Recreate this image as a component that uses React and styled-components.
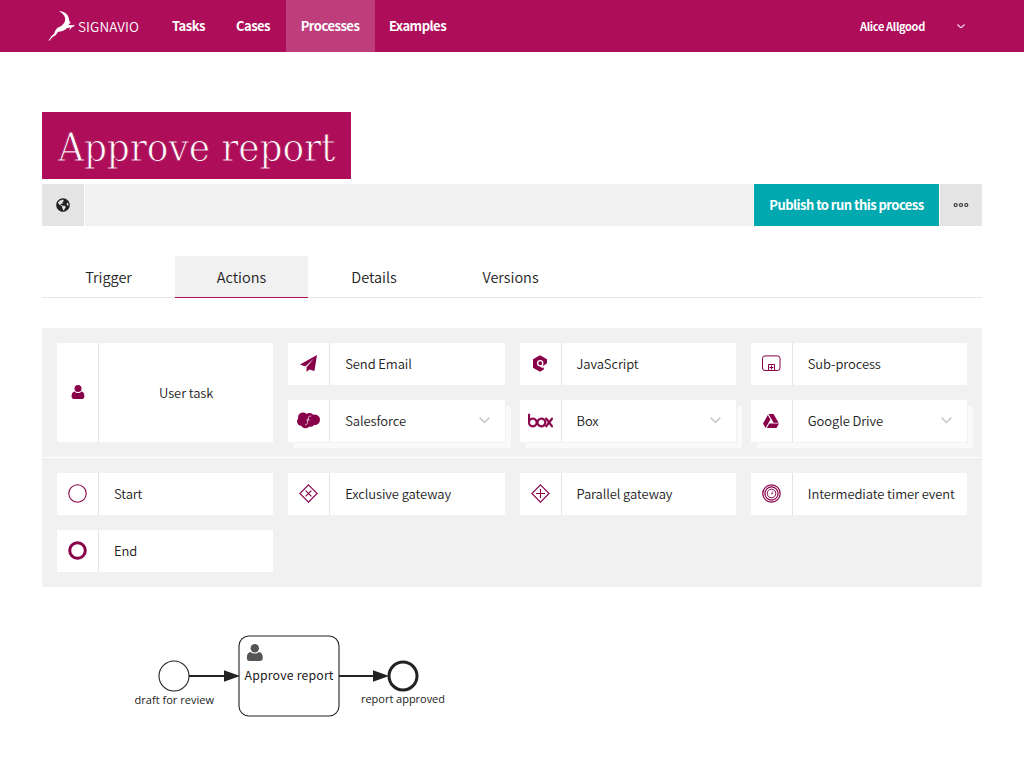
import React from 'react';
import styled, { createGlobalStyle } from 'styled-components';
import { FaGlobeAmericas, FaGoogleDrive } from 'react-icons/fa';
import { SiBox } from 'react-icons/si';

const magenta = '#ae0d5a';
const plum = '#870048';
const ink = '#222222';
const sans = '"Noto Sans CJK SC", "Noto Sans", sans-serif';

const GlobalStyle = createGlobalStyle`
  *, *::before, *::after { box-sizing: border-box; }
  body {
    margin: 0;
    background: #fff;
    color: ${ink};
    font-family: ${sans};
    font-size: 13px;
    line-height: 20px;
  }
  svg { display: block; flex: none; }
`;

const Header = styled.header`
  display: flex;
  align-items: stretch;
  height: 52px;
  padding-left: 47px;
  background: ${magenta};
  color: #fff;
`;

const Brand = styled.div`
  display: flex;
  align-items: center;
  width: 110px;
  padding-bottom: 1px;
`;

const BrandName = styled.span`
  margin-left: 3px;
  font-size: 13.5px;
  font-weight: 350;
  letter-spacing: 0.1px;
`;

const Nav = styled.nav`
  display: flex;
`;

const NavItem = styled.a`
  display: flex;
  align-items: center;
  justify-content: center;
  width: ${(p) => p.$width}px;
  padding-right: 1px;
  font-size: 13px;
  font-weight: 700;
  letter-spacing: -0.5px;
  background: ${(p) => (p.$active ? '#be3d7b' : 'transparent')};
`;

const Account = styled.div`
  display: flex;
  align-items: center;
  justify-content: space-between;
  width: 105px;
  margin-left: auto;
  margin-right: 59px;
  font-size: 11px;
  font-weight: 700;
  letter-spacing: -0.35px;
`;

const Page = styled.main`
  padding: 60px 42px 0;
`;

const Title = styled.h1`
  display: flex;
  align-items: center;
  width: 309px;
  height: 67px;
  margin: 0 0 5px;
  padding: 2px 0 0 16px;
  background: ${magenta};
  color: #fff;
  font-family: "DejaVu Serif Condensed", "DejaVu Serif", serif;
  font-stretch: condensed;
  font-size: 40px;
  font-weight: 400;
  letter-spacing: -0.1px;
  white-space: nowrap;
  -webkit-text-stroke: 0.85px ${magenta};
`;

const Toolbar = styled.div`
  display: flex;
  gap: 1px;
  height: 42px;
`;

const IconButton = styled.button`
  display: flex;
  align-items: center;
  justify-content: center;
  width: 42px;
  padding: 0 0 1px;
  border: 0;
  background: #e4e4e4;
  color: ${ink};
`;

const ToolbarFill = styled.div`
  flex: 1;
  background: #f1f1f1;
`;

const PublishButton = styled.button`
  width: 185px;
  padding: 0 0 2px;
  border: 0;
  background: #00a9af;
  color: #fff;
  font-family: ${sans};
  font-size: 13px;
  font-weight: 700;
  letter-spacing: -0.53px;
  white-space: nowrap;
`;

const Tabs = styled.div`
  display: flex;
  height: 42px;
  margin-top: 30px;
  background: linear-gradient(#e4e4e4, #e4e4e4) bottom / 100% 1px no-repeat;
`;

const Tab = styled.div`
  display: flex;
  align-items: center;
  justify-content: center;
  width: ${(p) => p.$width}px;
  font-size: 14.5px;
  font-weight: 350;
  background: ${(p) => (p.$active ? '#f1f1f1' : 'transparent')};
  border-bottom: 1px solid ${(p) => (p.$active ? magenta : 'transparent')};
`;

const Palette = styled.section`
  display: grid;
  gap: 1px;
  margin-top: 30px;
`;

const PaletteGroup = styled.div`
  display: grid;
  grid-template-columns: repeat(4, 1fr);
  grid-auto-rows: 42px;
  gap: 15px;
  padding: 15px;
  background: #f1f1f1;
`;

const Card = styled.div`
  display: flex;
  grid-row: span ${(p) => (p.$tall ? 2 : 1)};
  min-width: 0;
  background: #fff;
  box-shadow: ${(p) => (p.$stacked ? '1px 1px 0 #f1f1f1, 6px 6px 0 #fafafa' : 'none')};
`;

const CardIcon = styled.div`
  display: flex;
  align-items: center;
  justify-content: center;
  width: 42px;
  flex: none;
  padding-bottom: 1px;
  border-right: 1px solid #e4e4e4;
  color: ${plum};
`;

const CardLabel = styled.div`
  display: flex;
  flex: 1;
  align-items: center;
  justify-content: ${(p) => (p.$centered ? 'center' : 'space-between')};
  padding: ${(p) => (p.$centered ? '1px 15px 0' : '0 15px 1px 15px')};
  font-weight: 350;
  letter-spacing: -0.1px;
  white-space: nowrap;
`;

const Antelope = () => (
  <svg width="28" height="31" viewBox="47 11 28 31" fill="#fff">
    <path d="M60 12.200c4.800.3 8.700 3.300 9 8.300l.4 1.500 1.300 2.200-1.700.6-.3 1.200 4.400.2 1.400-.5-.3 1.600-2.500 1-2.100 3.300.3-3-3.100.6c-2.100 2.500-5 3.200-8.600 3.500l-2.400 3.400-3.500 2.100-3 3.500-.8-.3 3-4.300 2.500-2 1.300-3.600 2-2.500 4.300-2.200 2.500-2.900.8-1.800c1.300-3.800-1.300-7.600-5.900-9.900z" />
  </svg>
);

const Chevron = ({ width = 11, color = '#c8c8c8', stroke = 1.4 }) => (
  <svg width={width} height={width * 0.6} viewBox="0 0 10 6" fill="none" stroke={color} strokeWidth={stroke}>
    <path d="M.6.6 5 5 9.400.6" />
  </svg>
);

const Person = ({ size = 14, color = plum }) => (
  <svg width={size} height={size} viewBox="0 0 14 14" fill={color}>
    <circle cx="7" cy="3.500" r="3.500" />
    <path d="M3.600 6.500C1.500 6.800.6 8.700.6 11.300.6 13 1.500 14 3 14h8c1.500 0 2.400-1 2.400-2.700 0-2.600-.9-4.500-3-4.800C9.500 7.500 8.400 8 7 8S4.500 7.500 3.600 6.500z" />
  </svg>
);

const PaperPlane = () => (
  <svg width="17" height="17" viewBox="0 0 16 16" fill={plum}>
    <path d="M16 0 0 9l5 1.900L13 3.300 6.200 11.500V16l2.500-2.300 4.900 1.300z" />
  </svg>
);

const Salesforce = () => (
  <svg width="23" height="17" viewBox="0 0 23 17" fill={plum}>
    <circle cx="6" cy="5.300" r="4.900" />
    <circle cx="4.200" cy="9.500" r="4.200" />
    <circle cx="12.500" cy="5.300" r="4.400" />
    <circle cx="17.800" cy="7.700" r="5.200" />
    <circle cx="8.500" cy="11.500" r="4.800" />
    <circle cx="13.500" cy="10.500" r="4.300" />
    <path d="M14.200 4.200c-1.600-.6-2.500.2-2.800 1.600l-1.100 5.200c-.3 1.300-.9 2-2.200 1.700M9.300 7.900h3.400" fill="none" stroke="#fff" strokeWidth=".7" />
  </svg>
);

const HexScript = () => (
  <svg width="16" height="17" viewBox="0 0 16 17">
    <path d="M8 .3 15 4.300V8.200L11.500 10.700 9 12.200l2.800 2.400L8 16.700 1 12.700V4.300z" fill={plum} />
    <path d="M9.500 12.800h2.600l-1 2.200z" fill={plum} />
    <circle cx="8.200" cy="8.300" r="2.600" fill="none" stroke="#fff" strokeWidth="1.300" />
    <path d="M8.200 11.300h4" stroke="#fff" strokeWidth="1.200" />
  </svg>
);

const BoxLogo = styled(SiBox)`
  stroke: currentColor;
  stroke-width: 0.35;
`;

const SubProcess = () => (
  <svg width="19" height="17" viewBox="0 0 19 17" fill="none" stroke={plum}>
    <rect x=".5" y=".9" width="17.500" height="14.600" rx="2.500" />
    <path d="M6.500 15.500v-6h6v6M9.500 10.500v4M7.500 12.500h4" />
  </svg>
);

const Gateway = ({ children }) => (
  <svg width="19" height="19" viewBox="0 0 19 19" fill="none" stroke={plum} strokeWidth="1.100">
    <path d="M9.500.9 18.100 9.500 9.500 18.100.9 9.500z" />
    {children}
  </svg>
);

const Ring = ({ stroke, children }) => (
  <svg width="19" height="19" viewBox="0 0 19 19" fill="none" stroke={plum}>
    <circle cx="9.500" cy="9.500" r={9.3 - stroke / 2} strokeWidth={stroke} />
    {children}
  </svg>
);

const TimerEvent = () => (
  <Ring stroke={1.2}>
    <circle cx="9.500" cy="9.500" r="6.600" strokeWidth="1.200" />
    <circle cx="9.500" cy="9.500" r="4.300" />
    <path d="M9.300 9.800h1.900M9.600 9.800l1.300-2.600" strokeWidth=".7" />
  </Ring>
);

const Dots = () => (
  <svg width="16" height="6" viewBox="0 0 16 6" fill="none" stroke="#333" strokeWidth="1.200">
    <circle cx="2.700" cy="3" r="1.500" />
    <circle cx="8" cy="3" r="1.500" />
    <circle cx="13.300" cy="3" r="1.500" />
  </svg>
);

const taskItems = [
  { label: 'User task', icon: <Person />, tall: true },
  { label: 'Send Email', icon: <PaperPlane /> },
  { label: 'JavaScript', icon: <HexScript /> },
  { label: 'Sub-process', icon: <SubProcess /> },
  { label: 'Salesforce', icon: <Salesforce />, stacked: true },
  { label: 'Box', icon: <BoxLogo size={25} />, stacked: true },
  { label: 'Google Drive', icon: <FaGoogleDrive size={16} />, stacked: true },
];

const eventItems = [
  { label: 'Start', icon: <Ring stroke={1.1} /> },
  { label: 'Exclusive gateway', icon: <Gateway><path d="m6.600 6.600 5.800 5.800M12.400 6.600l-5.800 5.800" /></Gateway> },
  { label: 'Parallel gateway', icon: <Gateway><path d="M9.500 5v9M5 9.500h9" /></Gateway> },
  { label: 'Intermediate timer event', icon: <TimerEvent /> },
  { label: 'End', icon: <Ring stroke={3} /> },
];

const PaletteItems = ({ items }) => (
  <PaletteGroup>
    {items.map((item) => (
      <Card key={item.label} $tall={item.tall} $stacked={item.stacked}>
        <CardIcon>{item.icon}</CardIcon>
        <CardLabel $centered={item.tall}>
          {item.label}
          {item.stacked && <Chevron />}
        </CardLabel>
      </Card>
    ))}
  </PaletteGroup>
);

const Diagram = styled.svg`
  width: 940px;
  height: 181px;
  font-family: "Open Sans", "Noto Sans", sans-serif;
`;

const ProcessDiagram = () => (
  <Diagram viewBox="42 587 940 181" fill="none" stroke={ink}>
    <circle cx="174" cy="676" r="15" strokeWidth="1.100" />
    <path d="M189 676h36M339 676h36" strokeWidth="2" />
    <path d="M224 670.300 240 676l-16 5.700zM373 670.300 389 676l-16 5.700z" fill={ink} stroke="none" />
    <rect x="239" y="636" width="100" height="80" rx="10" strokeWidth="1.100" />
    <circle cx="403" cy="676" r="14" strokeWidth="3" />
    <g transform="translate(246 644)" fill="#555" stroke="none">
      <circle cx="8.800" cy="4.200" r="4.200" />
      <path d="M4.800 8C2 8.400.8 10.500.8 13.500c0 2.400.8 3.500 3 3.500h10c2.200 0 3-1.100 3-3.500 0-3-1.200-5.100-4-5.500-1 1-2.300 1.600-4 1.600S5.800 9 4.800 8z" />
    </g>
    <g fill={ink} stroke="none">
      <text x="134.500" y="704" fontSize="11" textLength="79.500">draft for review</text>
      <text x="244.500" y="680" fontSize="12.300" fontFamily="Noto Sans CJK SC, sans-serif" textLength="89">Approve report</text>
      <text x="361" y="703" fontSize="11" textLength="84">report approved</text>
    </g>
  </Diagram>
);

export default function App() {
  return (
    <>
      <GlobalStyle />
      <Header>
        <Brand>
          <Antelope />
          <BrandName>SIGNAVIO</BrandName>
        </Brand>
        <Nav>
          <NavItem $width={64}>Tasks</NavItem>
          <NavItem $width={65}>Cases</NavItem>
          <NavItem $width={89} $active>Processes</NavItem>
          <NavItem $width={86}>Examples</NavItem>
        </Nav>
        <Account>
          Alice Allgood
          <Chevron width={8} color="#f3d5e3" stroke={1.5} />
        </Account>
      </Header>
      <Page>
        <Title>Approve report</Title>
        <Toolbar>
          <IconButton aria-label="Visibility"><FaGlobeAmericas size={14} /></IconButton>
          <ToolbarFill />
          <PublishButton>Publish to run this process</PublishButton>
          <IconButton aria-label="More"><Dots /></IconButton>
        </Toolbar>
        <Tabs>
          <Tab $width={133}>Trigger</Tab>
          <Tab $width={133} $active>Actions</Tab>
          <Tab $width={132}>Details</Tab>
          <Tab $width={141}>Versions</Tab>
        </Tabs>
        <Palette>
          <PaletteItems items={taskItems} />
          <PaletteItems items={eventItems} />
        </Palette>
        <ProcessDiagram />
      </Page>
    </>
  );
}
